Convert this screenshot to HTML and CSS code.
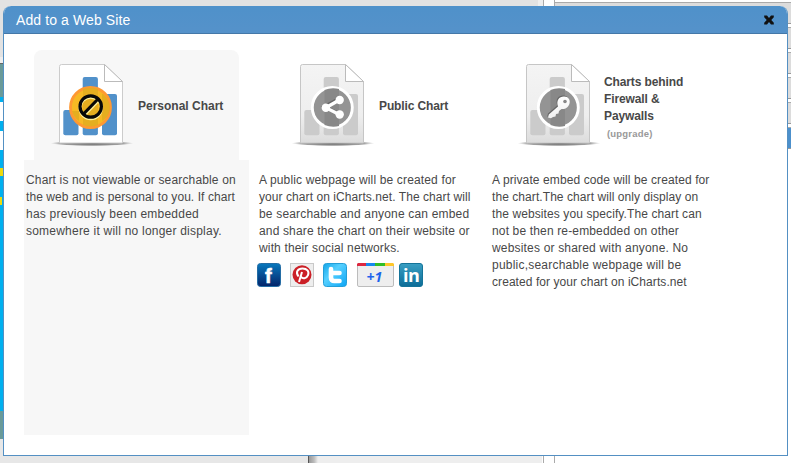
FILE: index.html
```
<!DOCTYPE html>
<html lang="en">
<head>
<meta charset="utf-8">
<title>Add to a Web Site</title>
<link rel="stylesheet" href="styles.css">
</head>
<body>
<svg class="defs" width="0" height="0" aria-hidden="true">
  <defs>
    <linearGradient id="paper" x1="0" y1="0" x2="0" y2="1"><stop offset="0" stop-color="#f4f4f4"/><stop offset=".65" stop-color="#eeeeee"/><stop offset="1" stop-color="#dcdcdc"/></linearGradient>
    <radialGradient id="shade"><stop offset="0" stop-color="#555"/><stop offset=".75" stop-color="#888" stop-opacity=".8"/><stop offset="1" stop-color="#aaa" stop-opacity="0"/></radialGradient>
    <linearGradient id="fb" x1="0" y1="0" x2="0" y2="1"><stop offset="0" stop-color="#0878bd"/><stop offset="1" stop-color="#03246a"/></linearGradient>
    <linearGradient id="tw" x1="0" y1="0" x2="1" y2="1"><stop offset="0" stop-color="#13a5e8"/><stop offset=".4" stop-color="#56d0ff"/><stop offset="1" stop-color="#0ba4f5"/></linearGradient>
    <linearGradient id="li" x1="0" y1="0" x2="0" y2="1"><stop offset="0" stop-color="#3a9fc3"/><stop offset="1" stop-color="#0c6c97"/></linearGradient>
    <linearGradient id="key" x1="0" y1="0" x2="0" y2="1"><stop offset="0" stop-color="#fff"/><stop offset="1" stop-color="#f0f0f0"/></linearGradient>
    <g id="sheet">
      <ellipse cx="92" cy="143.300" rx="41.500" ry="2.800" fill="url(#shade)" stroke="none"/>
      <path d="M59.500 66.500q0-2 2-2H104.500L122.500 81.500V143H59.500z" stroke-width="1"/>
    </g>
    <g id="bars"><rect x="63.300" y="110" width="15.200" height="25.300" rx="2"/><rect x="82.700" y="77" width="15.200" height="58.300" rx="2"/><rect x="102" y="94" width="15" height="41.300" rx="2"/></g>
    <path id="fold" d="M104.500 64.500V81.500H122.500z" fill="#fff" stroke="#bbb"/>
  </defs>
</svg>
<div class="page">
  <div class="workspace">
    <div class="toolbar"></div>
    <div class="edge"></div>
    <div class="banner"></div>
    <div class="canvas">
      <div class="cell first"></div><div class="cell second"></div>
      <div class="mark one"></div><div class="mark two"></div>
    </div>
    <div class="banner lower"></div>
    <div class="status"><span class="status-shadow"></span></div>
  </div>
  <div class="gutter"></div>
  <div class="options">
    <div class="option tall"></div><div class="option"></div><div class="option"></div><div class="option"></div><div class="option"></div><div class="option chosen"></div>
  </div>
</div>
<section class="dialog">
  <header class="titlebar">
    <h1>Add to a Web Site</h1>
    <svg class="close" width="12" height="12" viewBox="0 0 12 12"><path d="M1.200 1.500H4L6 3.900 8 1.500h2.800v1.800L8.300 6l2.500 2.700v1.800H8L6 8.100 4 10.500H1.200V8.700L3.700 6 1.200 3.300z" fill="#111"/></svg>
  </header>
  <div class="choices">
    <article class="choice selected">
      <div class="choice-head">
        <svg class="doc" width="85" height="88" viewBox="50 60 85 88">
          <use href="#sheet" fill="#fff" stroke="#ccc"/><use href="#fold"/><use href="#bars" fill="#5191ca"/>
          <circle cx="90.500" cy="107.500" r="20" fill="#f7b924" stroke="#ff9933" stroke-width="2.800"/>
          <g fill="#e2ac20" opacity=".85"><path d="M83 89q7.500-3 15 0v36q-7.500 3-15 0zM102 94h1q7 6 7 13.500t-7 13h-1zM72 111h7v10q-5-3-7-10z"/></g>
          <g fill="none" stroke="#fff29a" stroke-width="3"><circle cx="90.700" cy="108" r="10.700"/><path d="M84 115.500L98 101"/></g>
          <g fill="none" stroke="#080808" stroke-width="3.200"><circle cx="90.700" cy="106.500" r="10.700"/><path d="M83.500 114L98 99"/></g>
        </svg>
        <h2>Personal Chart</h2>
      </div>
      <div class="choice-body">
        <p><span class="t15">Chart is not viewable or searchable on</span><br><span class="t07">the web and is personal to you. If chart</span><br><span class="t22">has previously been embedded</span><br><span class="t22">somewhere it will no longer display.</span></p>
      </div>
    </article>
    <article class="choice public">
      <div class="choice-head">
        <svg class="doc" width="85" height="88" viewBox="50 60 85 88">
          <use href="#sheet" fill="url(#paper)" stroke="#c6c6c6"/><use href="#fold"/><use href="#bars" fill="#cbcbcb"/>
          <circle cx="91.300" cy="107.500" r="20" fill="#949494" stroke="#fff" stroke-width="2.900"/>
          <path d="M83.500 90q7-3 14.500-1v37q-7 2-14.500-1z" fill="#888"/>
          <path d="M97.500 99L83.500 106.700 97.500 113.500" fill="none" stroke="#666" stroke-width="3.500"/>
          <g fill="#fff"><path d="M98.300 100L84.800 107.700 98.300 114.500" fill="none" stroke="#fff" stroke-width="3.300"/><circle cx="98.700" cy="100" r="4.200"/><circle cx="84.800" cy="107.700" r="4.200"/><circle cx="98.700" cy="114.500" r="4.200"/></g>
        </svg>
        <h2>Public Chart</h2>
      </div>
      <div class="choice-body">
        <p><span class="t15">A public webpage will be created for</span><br><span class="t07">your chart on iCharts.net. The chart will</span><br><span class="t18">be searchable and anyone can embed</span><br><span class="t15">and share the chart on their website or</span><br><span class="t15">with their social networks.</span></p>
        <div class="social">
          <svg width="24" height="24" viewBox="0 0 24 24"><rect x=".5" y=".5" width="23" height="23" rx="3" fill="url(#fb)" stroke="#246da5"/><text x="8" y="19.500" class="fb-letter">f</text></svg>
          <svg width="24" height="24" viewBox="0 0 24 24"><rect x=".5" y=".5" width="23" height="23" fill="#eee" stroke="#c9c9c9"/><circle cx="12" cy="11.700" r="9.500" fill="#cb2027"/><path d="M9 19l3-10M8.500 13.500C5 9 8 5.500 12.500 5.500s7 3 5.500 6.700-5.500 4-7 1.500" fill="none" stroke="#fff" stroke-width="2"/></svg>
          <svg width="24" height="24" viewBox="0 0 24 24"><rect x=".5" y=".5" width="23" height="23" rx="3" fill="url(#tw)" stroke="#249fd8"/><path d="M8 6v8.500q0 3.500 3.500 3.500h5M8 10h8.500" fill="none" stroke="#fff" stroke-width="4.600" stroke-linecap="round" stroke-linejoin="round"/></svg>
          <svg class="plus" width="37" height="24" viewBox="0 0 37 24"><rect x=".5" y=".5" width="36" height="23" rx="1.500" fill="#eee" stroke="#bcbcbc"/><path d="M1 0h8v3H0V1z" fill="#dc2840"/><path d="M9 0h9v3H9z" fill="#1688ee"/><path d="M18 0h10v3H18z" fill="#31bd27"/><path d="M28 0h8l1 1v2h-9z" fill="#ffc729"/><text x="9.500" y="18.500" class="plus-letter">+1</text></svg>
          <svg width="24" height="24" viewBox="0 0 24 24"><rect x=".5" y=".5" width="23" height="23" rx="2.500" fill="url(#li)" stroke="#157499"/><text x="4" y="18.500" class="in-letter">in</text></svg>
        </div>
      </div>
    </article>
    <article class="choice private">
      <div class="choice-head">
        <svg class="doc" width="85" height="88" viewBox="50 60 85 88">
          <use href="#sheet" fill="url(#paper)" stroke="#c6c6c6"/><use href="#fold"/><use href="#bars" fill="#cbcbcb"/>
          <circle cx="91.300" cy="107.500" r="20" fill="#949494" stroke="#fff" stroke-width="2.900"/>
          <path d="M83.500 90q7-3 14.500-1v37q-7 2-14.500-1z" fill="#888"/>
          <path d="M91 106.500c-2-6 1-10 6-10 4.500 0 6.500 3.500 5.500 7s-4 6-8 5.500l-2.500 2-.5 2.500-2.500.5-.5 2.500-2.500.5-2 1.300-3-.8.800-3z" fill="#666" transform="translate(-.8 -1)"/>
          <path d="M91 106.500c-2-6 1-10 6-10 4.500 0 6.500 3.500 5.500 7s-4 6-8 5.500l-2.500 2-.5 2.500-2.500.5-.5 2.500-2.500.5-2 1.300-3-.8.800-3z" fill="url(#key)"/>
          <circle cx="98" cy="101.500" r="1.800" fill="#888"/>
        </svg>
        <h2>Charts behind<br>Firewall &amp;<br>Paywalls<small>(upgrade)</small></h2>
      </div>
      <div class="choice-body">
        <p><span class="t10">A private embed code will be created for</span><br><span class="t07">the chart.The chart will only display on</span><br><span class="t10">the websites you specify.The chart can</span><br><span class="t15">not be then re-embedded on other</span><br><span class="t18">websites or shared with anyone. No</span><br><span class="t22">public,searchable webpage will be</span><br><span class="t07">created for your chart on iCharts.net</span></p>
      </div>
    </article>
  </div>
</section>
</body>
</html>
```
FILE: styles.css
```
* { box-sizing: border-box; }
body { margin: 0; width: 791px; height: 463px; overflow: hidden; position: relative; background: #fff; color: #484848; font: 12px/17px "Liberation Sans", Arial, sans-serif; }
h1, h2, p { margin: 0; }
svg { display: block; flex: none; }
.defs { position: absolute; }

.page { display: flex; height: 463px; }
.workspace { width: 544px; display: flex; flex-direction: column; border-right: 1px solid #aaa; }
.toolbar { height: 57px; background: linear-gradient(90deg, #e2e2e2 538px, #eee 538px); }
.edge { height: 7px; background: #eee; border-bottom: 1px solid #666; }
.banner { height: 33px; background: #699a99; }
.canvas { height: 314px; background: #00b0ef; display: flex; flex-direction: column; align-items: flex-start; padding-top: 5px; }
.cell { width: 3px; height: 19px; background: #fff; }
.cell.second { margin-top: 10px; }
.mark { height: 8px; background: #eed90d; }
.mark.one { width: 3px; margin-top: 18px; }
.mark.two { width: 2px; margin-top: 21px; }
.banner.lower { height: 28px; }
.status { flex: 1; background: linear-gradient(90deg, #e7e7e7 308px, #eee 308px 542px, #fff 542px); }
.status-shadow { display: block; margin-left: 308px; width: 10px; height: 100%; border-left: 1px solid #555; background: linear-gradient(90deg, #999, #bbb 55%, #eee); }
.gutter { width: 10px; }
.options { flex: 1; border-left: 1px solid #aaa; padding-top: 2px; }
.option { height: 22px; margin-bottom: 3px; background: #dcdcdc; border-top: 1px solid #aaa; border-bottom: 1px solid #999; }
.option.chosen { background: #4c90cc; }

.dialog { position: absolute; left: 3px; top: 6px; width: 785px; height: 450px; background: #fff; border: 1px solid #5490c3; border-top: 0; border-radius: 8px 8px 0 0; overflow: hidden; }
.titlebar { height: 28px; margin: 0 -1px; display: flex; align-items: center; justify-content: space-between; padding: 0 13px; background: linear-gradient(#4f91ca, #5592ca); border-bottom: 1px solid #4478a8; border-radius: 8px 8px 0 0; }
.titlebar h1 { font-size: 14px; font-weight: 400; color: #fff; line-height: 18px; letter-spacing: .1px; }
.choices { display: flex; padding: 16px 0 0 20px; }
.choice-head { height: 110px; display: flex; align-items: center; padding-left: 16px; }
.choice-head h2 { font-size: 12px; line-height: 17px; font-weight: 700; white-space: nowrap; margin: 2px 0 0 3px; }
.choice-head small { display: block; font-size: 9.500px; line-height: 17px; margin: 0 0 1px 3px; color: #999; letter-spacing: .2px; }
.doc { margin-top: -2px; }
.choice-body { padding-top: 12px; white-space: nowrap; }
.selected { width: 225px; }
.selected .choice-head { width: 205px; margin-left: 10px; background: #f7f7f7; border-radius: 8px 8px 0 0; }
.selected .choice-body { height: 275px; padding-left: 2px; background: #f7f7f7; }
.public { width: 233px; }
.public .choice-head { padding-left: 42px; }
.public h2 { letter-spacing: -.12px; }
.public .choice-body { padding-left: 10px; }
.private .choice-head { padding-left: 35px; }
.private .choice-head h2 { margin: 6px 0 0 2px; letter-spacing: -.12px; }
.private .choice-body { padding-left: 10px; }
.t07 { letter-spacing: .07px; }
.t10 { letter-spacing: .1px; }
.t15 { letter-spacing: .15px; }
.t18 { letter-spacing: .18px; }
.t22 { letter-spacing: .22px; }
.social { display: flex; gap: 9px; margin: 6px 0 0 -2px; }
.social .plus { margin: 0 -4px 0 1px; }
.fb-letter { font: 700 20px "Liberation Sans", sans-serif; fill: #fff; stroke: #fff; stroke-width: .6px; }
.plus-letter { font: italic 700 14px "Open Sans", sans-serif; fill: #1d63ec; }
.in-letter { font: 700 18px "Open Sans", sans-serif; fill: #fff; letter-spacing: -.5px; }
```
